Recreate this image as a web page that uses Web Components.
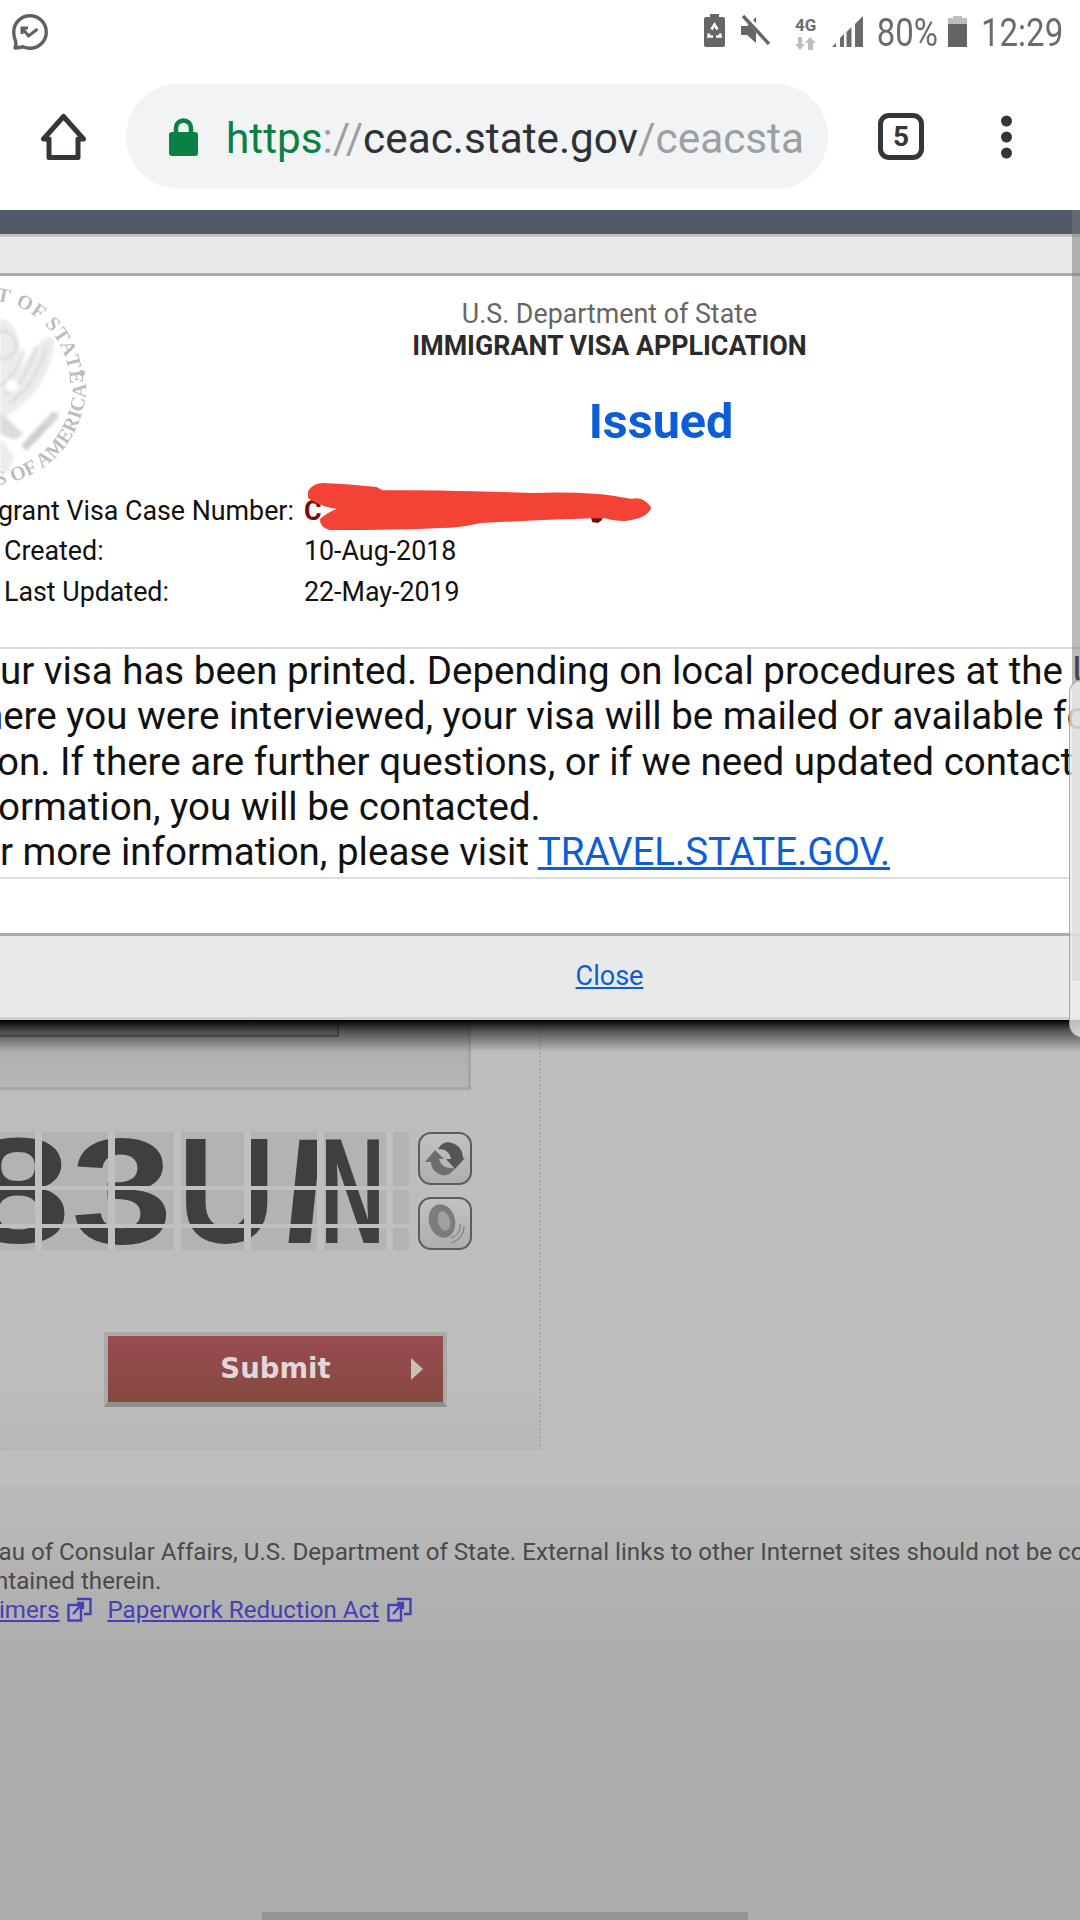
<!DOCTYPE html>
<html>
<head>
<meta charset="utf-8">
<title>CEAC status</title>
<style>
  html, body { margin: 0; padding: 0; background: #fff; }
  body { width: 1080px; height: 1920px; overflow: hidden; font-family: Roboto, sans-serif; }
</style>
</head>
<body>
<phone-frame>
  <status-strip slot="status"></status-strip>
  <browser-bar slot="bar" url-host="ceac.state.gov" url-path="/ceacsta" tabs="5"></browser-bar>
  <visa-page slot="page">
    <visa-dialog slot="dialog">
      <case-row slot="rows" first label="grant Visa Case Number:"><b>C</b></case-row>
      <case-row slot="rows" label="Created:">10-Aug-2018</case-row>
      <case-row slot="rows" label="Last Updated:">22-May-2019</case-row>
      <span slot="msg" class="l">ur visa has been printed. Depending on local procedures at the U</span>
      <span slot="msg" class="l" style="margin-left:-18px">here you were interviewed, your visa will be mailed or available fo</span>
      <span slot="msg" class="l" style="margin-left:-3px">on. If there are further questions, or if we need updated contact</span>
      <span slot="msg" class="l" style="margin-left:-2px">ormation, you will be contacted.</span>
      <span slot="msg" class="l">r more information, please visit <visa-link>TRAVEL.STATE.GOV.</visa-link></span>
    </visa-dialog>
    <captcha-form slot="form"></captcha-form>
    <site-footer slot="footer"></site-footer>
  </visa-page>
</phone-frame>

<script>
(function() {

function define(name, html) {
  class El extends HTMLElement {
    constructor() {
      super();
      const template = document.createElement("template");
      template.innerHTML = typeof html === "function" ? html(this) : html;
      this.attachShadow({mode: "open"}).appendChild(template.content.cloneNode(true));
    }
  }
  customElements.define(name, El);
}

const DITHER = "conic-gradient(rgba(0,0,0,.05) 25%,transparent 0 50%,rgba(0,0,0,.05) 0 75%,transparent 0)";
const EXT_ICON = `<svg width="25" height="25" viewBox="0 0 25 25" fill="none" stroke="#4840b8" stroke-width="2.400"><path d="M10 2h13.500v15H17"/><path d="M1.500 8H14v15.500H1.500z" fill="#b4b4c8"/><path stroke-width="2.400" d="M6 17l9-10M10 6h6v6"/></svg>`;

define("phone-frame", `<style>
  :host { display: flex; flex-direction: column; width: 1080px; height: 1920px; }
  </style>
  <slot name="status"></slot><slot name="bar"></slot><slot name="page"></slot>`);

define("status-strip", `<style>
  :host { display: flex; align-items: flex-start; height: 58px; box-sizing: border-box; padding-top: 14px; color: #6b6b6b; background: #fff; font-family: Roboto, sans-serif; }
  svg { display: block; flex: none; }
  .txt { font-size: 33px; line-height: 34px; transform: scaleY(1.17); transform-origin: 50% 0; margin-top: -1px; flex: none; }
  .spacer { flex: 1; }
  .g { font-size: 17px; font-weight: 700; line-height: 17px; color: #6b6b6b; }
  .net { display: flex; flex-direction: column; align-items: center; width: 24px; margin: 3px 14px 0 23px; flex: none; }
  </style>
  <svg style="margin-left:12px" width="36" height="36" viewBox="0 0 36 36" fill="none" stroke="#606060" stroke-width="3.400" stroke-linejoin="round" stroke-linecap="round">
    <path d="M3 34c1-2 1.500-4 .5-7C2.200 24 1.700 21 1.700 18C1.700 9 9 1.700 18 1.700S34.300 9 34.300 18S27 34.300 18 34.300c-2.500 0-5-.6-7-1.500c-2.500.4-5 1.200-8 1.200z"/>
    <path stroke-width="3" stroke-linecap="butt" stroke-linejoin="miter" d="M10 20v-6h6M10.500 14.500l6 7.500 9-7"/>
  </svg>
  <div class="spacer"></div>
  <svg width="21" height="33" viewBox="0 0 21 33">
    <path fill="#666" d="M6 0h9v3h4q2 0 2 2v26q0 2-2 2H2q-2 0-2-2V5q0-2 2-2h4z"/>
    <path fill="none" stroke="#fff" stroke-width="2.600" d="M7.500 15.500l3-5 3 5M5 19.500l-.5 3H9M16 19.500l.5 3H12"/>
  </svg>
  <svg style="margin-left:16px" width="30" height="31" viewBox="0 0 30 31">
    <path fill="#666" d="M0 12h6l9-9v26l-9-8H0z"/>
    <path stroke="#fff" stroke-width="6" d="M3 0l25 29"/>
    <path stroke="#666" stroke-width="3.400" d="M2 2l26 28"/>
  </svg>
  <div class="net"><span class="g">4G</span>
    <svg style="margin-top:3px" width="23" height="13" viewBox="0 0 23 13" fill="#bdbdbd"><path d="M4 0h4v7h3l-5 6-5-6h3zM16 0l6 6h-3v7h-5V6h-3z"/></svg>
  </div>
  <svg style="margin-top:2px" width="31" height="31" viewBox="0 0 31 31" fill="#6b6b6b">
    <path d="M0 31l4-4v4zM8 31V22l4-4v13zM14.500 31V16l5-5v20zM23 31V8l8-8v31z"/>
  </svg>
  <div class="txt" style="margin-left:14px">80%</div>
  <svg style="margin:2px 0 0 10px" width="19" height="31" viewBox="0 0 19 31">
    <path fill="#bdbdbd" d="M5 0h9v2h5v6H0V2h5z"/><rect y="8" width="19" height="23" fill="#636363"/>
  </svg>
  <div class="txt" style="margin-left:14px;width:83px">12:29</div>
  <div style="width:16px;flex:none"></div>`);

define("browser-bar", (el) => `<style>
  :host { display: flex; align-items: flex-start; height: 152px; background: #fff; box-sizing: border-box; padding-top: 26px; font-family: Roboto, sans-serif; }
  svg { display: block; flex: none; }
  .pill { flex: none; margin-left: 39px; width: 702px; height: 105px; border-radius: 53px; background: #f1f3f4; display: flex; align-items: center; box-sizing: border-box; padding-left: 43px; overflow: hidden; }
  .url { font-size: 42.300px; line-height: 50px; margin: 4px 0 0 28px; white-space: nowrap; width: 578px; overflow: hidden; color: #9aa0a6; }
  .s { color: #0b8043; } .h { color: #2f3134; }
  .tab { flex: none; margin: 29px 0 0 50px; width: 46px; height: 47px; box-sizing: border-box; border: 5px solid #34373a; border-radius: 11px; text-align: center; font-size: 28px; font-weight: 700; line-height: 37px; color: #34373a; }
  .dots { flex: none; margin: 31px 0 0 76px; }
  </style>
  <svg style="margin:29px 0 0 40px" width="47" height="47" viewBox="0 0 47 47" fill="none" stroke="#33363a" stroke-width="5" stroke-linejoin="round">
    <path d="M23.500 3.500L3.500 26h5.500v18.500h29V26h5.500z"/>
  </svg>
  <div class="pill">
    <svg width="29" height="38" viewBox="0 0 29 38">
      <path fill="none" stroke="#0b8043" stroke-width="4.500" d="M7 16V10a7.500 7.500 0 0 1 15 0v6"/>
      <rect y="14" width="29" height="24" rx="3" fill="#0b8043"/>
    </svg>
    <div class="url"><span class="s">https</span>://<span class="h">${el.getAttribute("url-host")}</span>${el.getAttribute("url-path")}</div>
  </div>
  <div class="tab">${el.getAttribute("tabs")}</div>
  <svg class="dots" width="14" height="44" viewBox="0 0 14 44" fill="#33363a"><circle cx="6.500" cy="6" r="5.500"/><circle cx="6.500" cy="22" r="5.500"/><circle cx="6.500" cy="38" r="5.500"/></svg>`);

define("visa-page", `<style>
  :host { display: block; position: relative; height: 1710px; overflow: hidden; background: #bebebe; }
  .top { height: 24px; background-color: #535c6d; background-image: ${DITHER}; background-size: 4px 4px; }
  .shade { position: absolute; left: 0; right: 0; top: 810px; height: 32px; background: linear-gradient(#000, rgba(0,0,0,.55) 35%, rgba(0,0,0,0)); z-index: 2; }
  .scroll { position: absolute; right: 0; top: 0; width: 8px; height: 771px; background: rgba(120,120,120,.5); z-index: 3; }
  .edge { position: absolute; right: -14px; top: 469px; width: 25px; height: 359px; box-sizing: border-box; border: 1px solid rgba(110,110,110,.55); border-radius: 14px 0 0 14px; background: rgba(235,235,235,.8); z-index: 4; }
  .home { position: absolute; left: 262px; top: 1702px; width: 486px; height: 8px; background: #959595; }
  </style>
  <div class="top"></div>
  <slot name="dialog"></slot>
  <slot name="form"></slot>
  <slot name="footer"></slot>
  <div class="shade"></div>
  <div class="scroll"></div>
  <div class="edge"></div>
  <div class="home"></div>`);

define("visa-link", `<style>
  :host { display: inline; color: #0b5ed7; text-decoration: underline; }
  </style><slot></slot>`);

define("visa-dialog", `<style>
  :host { display: block; position: relative; background: #fff; color: #111; font-family: Roboto, sans-serif; overflow: hidden; height: 786px; box-sizing: border-box; border-top: 3px solid #c4c4c4; border-bottom: 3px solid #d0d0d0; }
  .head { height: 36px; background: #e9e9e9; border-bottom: 3px solid #ababab; }
  .seal { position: absolute; left: 0; top: 39px; width: 100px; height: 220px; }
  .main { height: 373px; box-sizing: border-box; padding-top: 22px; border-bottom: 2px solid #dcdcdc; }
  .dept { text-align: center; width: 1219px; font-size: 26.800px; line-height: 32px; color: #666; }
  .kind { text-align: center; width: 1219px; font-size: 26.800px; line-height: 32px; font-weight: 700; color: #2b2b2b; }
  .status { text-align: center; width: 1322px; margin-top: 30px; font-size: 48.500px; line-height: 60px; font-weight: 700; color: #0b5ed7; }
  .rows { margin-top: 39px; }
  .msg { height: 231px; box-sizing: border-box; border-bottom: 2px solid #dcdcdc; margin-top: -1px; font-size: 38.500px; line-height: 45.300px; color: #111; }
  ::slotted(.l) { display: block; white-space: nowrap; }
  .gap { height: 57px; box-sizing: border-box; border-bottom: 3px solid #ababab; }
  .foot-wrap { background: #e9e9e9; height: 81px; }
  .foot { width: 1219px; text-align: center; font-size: 27px; line-height: 80px; }
  .scribble { position: absolute; left: 0; top: 0; width: 1080px; height: 786px; pointer-events: none; }
  </style>
  <div class="head"></div>
  <dialog-seal class="seal"></dialog-seal>
  <div class="main">
    <div class="dept">U.S. Department of State</div>
    <div class="kind">IMMIGRANT VISA APPLICATION</div>
    <div class="status">Issued</div>
    <div class="rows"><slot name="rows"></slot></div>
  </div>
  <div class="msg"><slot name="msg"></slot></div>
  <div class="gap"></div>
  <div class="foot-wrap"><div class="foot"><visa-link>Close</visa-link></div></div>
  <svg class="scribble" viewBox="0 237 1080 786">
    <path fill="#7a0a0a" d="M590 512h13l-1 8-4 3-6-1z"/>
    <path fill="#f44336" stroke="#f44336" stroke-width="4" stroke-linejoin="round" d="M310 492Q314 485 324 485Q350 486 376 489L382 492Q440 492 530 495Q590 493 620 499L632 501Q642 498 649 508Q645 517 625 519Q612 519 605 516Q560 517 480 521Q460 526 440 526Q400 528 330 528Q322 526 322 520Q328 514 344 508Q322 506 310 497z"/>
  </svg>`);

define("dialog-seal", `<style>
  :host { display: block; }
  svg { display: block; }
  text { font-family: "Liberation Serif", serif; fill: #bdbdbd; font-size: 20px; font-weight: 700; }
  </style>
  <svg width="100" height="220" viewBox="0 276 100 220">
    <defs>
      <path id="top" d="M-100 385a85 85 0 0 1 170 0"/>
      <path id="bot" d="M-116 385a101 101 0 0 0 202 0"/>
      <filter id="soft"><feGaussianBlur stdDeviation="1.500"/></filter>
      <filter id="softer"><feGaussianBlur stdDeviation=".6"/></filter>
    </defs>
    <g filter="url(#softer)">
      <text letter-spacing="1"><textPath href="#top" startOffset="144">T OF STATE</textPath></text>
      <text letter-spacing=".3"><textPath href="#bot" startOffset="170">S OF AMERICA</textPath></text>
      <circle cx="82" cy="373" r="3" fill="#bdbdbd"/>
    </g>
    <g filter="url(#soft)">
      <path fill="#ececec" d="M0 318c14 2 22 18 20 50l22-28c6-4 12-4 12 2c-2 24-14 50-36 66l-18 14z"/>
      <g fill="none" stroke="#dadada" stroke-width="2.500">
        <circle cx="2" cy="345" r="14"/>
        <path d="M4 396c14-8 26-26 32-50"/>
        <path d="M8 404c16-10 32-30 38-58"/>
        <path d="M0 386c10-6 20-20 24-36"/>
      </g>
      <circle cx="12" cy="386" r="6" fill="#fff"/>
      <path fill="none" stroke="#cfcfcf" stroke-width="8" d="M24 448l32-34"/>
      <path fill="none" stroke="#d8d8d8" stroke-width="5" d="M44 424l14-10"/>
      <path fill="#dddddd" d="M0 412l24 22-10 6-14-6z"/>
      <path fill="#ececec" d="M0 438l14 18-6 18-8-4z"/>
    </g>
  </svg>`);

define("case-row", (el) => `<style>
  :host { display: grid; grid-template-columns: 304px 1fr; font-size: 26.800px; line-height: 40.400px; color: #111; white-space: nowrap; }
  .label { margin-left: ${el.hasAttribute("first") ? -2 : 4}px; }
  ::slotted(b) { color: #7a0a0a; }
  </style>
  <div class="label">${el.getAttribute("label")}</div>
  <div><slot></slot></div>`);

define("captcha-form", `<style>
  :host { display: block; height: 430px; position: relative; background: linear-gradient(#bdbdbd 86%, #b9b9b9); width: 541px; box-sizing: border-box; border-right: 2px dotted #ababa6; border-bottom: 2px dotted #b2b0aa; font-family: "DejaVu Sans", sans-serif; }
  .input { width: 471px; height: 70px; box-sizing: border-box; border-right: 3px solid #a6a6a6; border-bottom: 3px solid #a6a6a6; background: linear-gradient(#aaaaaa, #b6b6b6); }
  .inner { width: 339px; height: 17px; box-sizing: border-box; border-right: 2px solid #777; border-bottom: 2px solid #777; background: #a0a0a0; }
  .row { display: flex; margin-top: 42px; height: 118px; }
  .tools { display: flex; flex-direction: column; justify-content: space-between; margin-left: 9px; }
  .btn-row { padding-left: 104px; margin-top: 82px; }
  </style>
  <div class="input"><div class="inner"></div></div>
  <div class="row">
    <captcha-image></captcha-image>
    <div class="tools">
      <tool-button>
        <svg width="44" height="38" viewBox="0 0 44 38">
          <path fill="#6d6d6d" d="M2 22L12 10l9 9h-5c2 7 7 10 16 9-4 6-8 8-13 7C12 33 8 28 8 22z"/>
          <path fill="#555" d="M42 18L32 29l-9-10h5c-1-7-6-10-13-10 3-5 8-8 14-6 7 2 11 8 11 15z"/>
        </svg>
      </tool-button>
      <tool-button>
        <svg width="44" height="44" viewBox="0 0 44 44" style="filter:blur(.5px)">
          <ellipse cx="19" cy="19" rx="13" ry="17" fill="#7c7c7c" transform="rotate(-15 19 19)"/>
          <ellipse cx="21" cy="19" rx="6" ry="10" fill="#a0a0a0" transform="rotate(-15 21 19)"/>
          <g fill="none" stroke="#8c8c8c" stroke-width="1.500"><path d="M37 22c1 7-3 12-9 14"/><path d="M41 24c0 9-5 14-12 17"/></g>
        </svg>
      </tool-button>
    </div>
  </div>
  <div class="btn-row"><submit-button>Submit</submit-button></div>`);

define("captcha-image", `<style>
  :host { display: block; position: relative; width: 409px; height: 118px; overflow: hidden; background: #b3b3b3; }
  .glyphs { display: flex; height: 118px; font-family: "Liberation Sans", sans-serif; font-weight: 700; font-size: 150px; line-height: 118px; color: #3f3f3f; }
  .glyphs span { display: block; flex: none; transform-origin: 0 50%; }
  .v, .h { position: absolute; background: #c0c0c0; }
  .v { top: 0; bottom: 0; width: 7px; }
  .h { left: 0; right: 0; height: 4px; }
  </style>
  <div class="glyphs">
    <span style="margin-left:-34px;width:105px;transform:scaleX(1.25)">8</span>
    <span style="width:107px;transform:scaleX(1.22)">3</span>
    <span style="width:106px;transform:scaleX(.9)">U</span>
    <span style="width:36px;transform:skewX(-6deg)">I</span>
    <span style="width:66px;transform:scaleX(.6)">N</span>
  </div>
  <i class="v" style="left:35px"></i><i class="v" style="left:108px"></i><i class="v" style="left:174px"></i>
  <i class="v" style="left:244px"></i><i class="v" style="left:317px"></i><i class="v" style="left:386px"></i>
  <i class="h" style="top:54px"></i><i class="h" style="top:92px"></i>`);

define("tool-button", `<style>
  :host { display: flex; align-items: center; justify-content: center; width: 54px; height: 53px; box-sizing: border-box; border: 2px solid #5c5c5c; border-radius: 13px; background: linear-gradient(#c2c2c2, #aeaeae); }
  </style><slot></slot>`);

define("submit-button", `<style>
  :host { display: block; width: 343px; height: 75px; box-sizing: border-box; border: 4px solid #a9a9a9; border-bottom-width: 5px; border-bottom-color: #8f8f8f; background: #a9a9a9; }
  .face { position: relative; display: block; height: 66px; background: linear-gradient(#984c51, #864841); color: #e3d6d8; font-weight: 700; font-size: 27.500px; line-height: 64px; text-align: center; }
  .tri { position: absolute; right: 20px; top: 22px; width: 0; height: 0; border-left: 12px solid #c9c0b4; border-top: 11px solid transparent; border-bottom: 11px solid transparent; }
  </style>
  <div class="face"><slot></slot><span class="tri"></span></div>`);

define("site-footer", `<style>
  :host { display: flex; flex-direction: column; margin-top: 36px; height: 434px; font-family: Roboto, sans-serif; font-size: 24.150px; line-height: 28.700px; color: #4a4a4a; white-space: nowrap; overflow: hidden; background: #adadad; }
  .band { position: relative; height: 196px; flex: none; box-sizing: border-box; padding-top: 52px; background: linear-gradient(#bababa, #b5b5b5 40%, #aeaeae); }
  .band::after { content: ""; position: absolute; left: 0; right: 0; bottom: 0; height: 122px; background-image: ${DITHER}; background-size: 4px 4px; opacity: .45; }
  .links { display: flex; align-items: center; height: 29px; }
  .links svg { flex: none; margin-left: 8px; }
  </style>
  <div class="band">
    <div style="margin-left:-1.500px">au of Consular Affairs, U.S. Department of State. External links to other Internet sites should not be co</div>
    <div style="margin-left:-5px">ntained therein.</div>
    <div class="links">
      <visa-link style="color:#4840b8;margin-left:-1px">imers</visa-link>${EXT_ICON}
      <visa-link style="color:#4840b8;margin-left:15px">Paperwork Reduction Act</visa-link>${EXT_ICON}
    </div>
  </div>`);

})();
</script>
</body>
</html>
